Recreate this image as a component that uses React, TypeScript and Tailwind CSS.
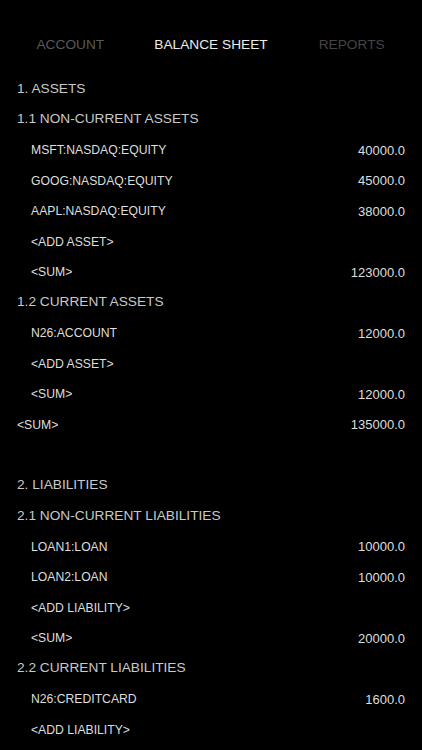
type Row =
  | { kind: "heading"; text: string }
  | { kind: "item"; text: string; value?: string; indent?: boolean }
  | { kind: "blank" };

const rows: Row[] = [
  { kind: "heading", text: "1. ASSETS" },
  { kind: "heading", text: "1.1 NON-CURRENT ASSETS" },
  { kind: "item", text: "MSFT:NASDAQ:EQUITY", value: "40000.0", indent: true },
  { kind: "item", text: "GOOG:NASDAQ:EQUITY", value: "45000.0", indent: true },
  { kind: "item", text: "AAPL:NASDAQ:EQUITY", value: "38000.0", indent: true },
  { kind: "item", text: "<ADD ASSET>", indent: true },
  { kind: "item", text: "<SUM>", value: "123000.0", indent: true },
  { kind: "heading", text: "1.2 CURRENT ASSETS" },
  { kind: "item", text: "N26:ACCOUNT", value: "12000.0", indent: true },
  { kind: "item", text: "<ADD ASSET>", indent: true },
  { kind: "item", text: "<SUM>", value: "12000.0", indent: true },
  { kind: "item", text: "<SUM>", value: "135000.0" },
  { kind: "blank" },
  { kind: "heading", text: "2. LIABILITIES" },
  { kind: "heading", text: "2.1 NON-CURRENT LIABILITIES" },
  { kind: "item", text: "LOAN1:LOAN", value: "10000.0", indent: true },
  { kind: "item", text: "LOAN2:LOAN", value: "10000.0", indent: true },
  { kind: "item", text: "<ADD LIABILITY>", indent: true },
  { kind: "item", text: "<SUM>", value: "20000.0", indent: true },
  { kind: "heading", text: "2.2 CURRENT LIABILITIES" },
  { kind: "item", text: "N26:CREDITCARD", value: "1600.0", indent: true },
  { kind: "item", text: "<ADD LIABILITY>", indent: true },
];

export default function App() {
  return (
    <div
      className="h-[750px] w-[422px] overflow-hidden bg-black"
      style={{ fontFamily: "'Liberation Sans', Arial, sans-serif" }}
    >
      <div className="grid h-[74px] grid-cols-3 pt-[35px] text-[13.7px] leading-[20px]">
        <div className="text-center text-[#595959]">ACCOUNT</div>
        <div className="text-center text-[#ececec]">BALANCE SHEET</div>
        <div className="text-center text-[#444444]">REPORTS</div>
      </div>

      <div>
        {rows.map((row, i) => {
          if (row.kind === "blank") return <div key={i} className="h-[30.5px]" />;
          if (row.kind === "heading")
            return (
              <div
                key={i}
                className="flex h-[30.5px] items-center pl-[17px] text-[13.7px] text-[#c9c9c9]"
              >
                {row.text}
              </div>
            );
          return (
            <div
              key={i}
              className={`flex h-[30.5px] items-center justify-between pr-[17px] text-[#dedede] ${
                row.indent ? "pl-[31px]" : "pl-[17px]"
              }`}
            >
              <span className="text-[12.2px]">{row.text}</span>
              {row.value && <span className="text-[13px]">{row.value}</span>}
            </div>
          );
        })}
      </div>
    </div>
  );
}
